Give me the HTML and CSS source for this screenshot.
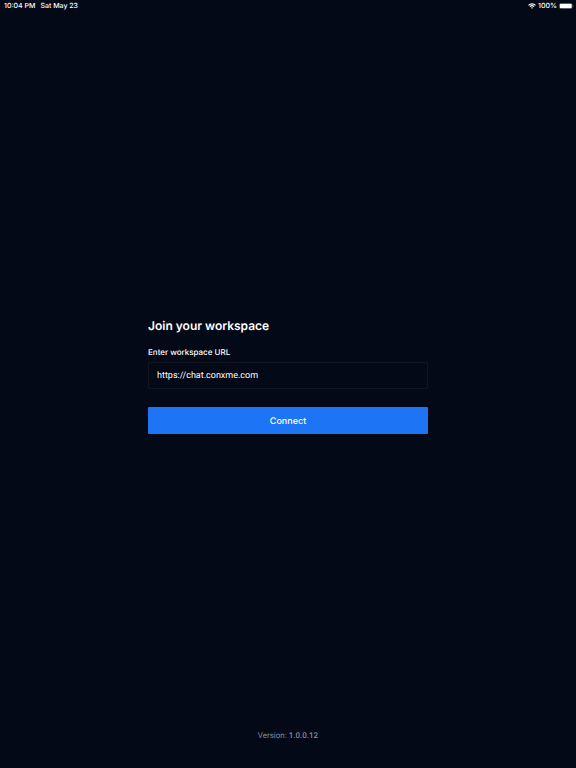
FILE: index.html
```html
<!DOCTYPE html>
<html lang="en">
<head>
<meta charset="utf-8">
<meta name="viewport" content="width=device-width, initial-scale=1">
<title>Join your workspace</title>
<link rel="stylesheet" href="styles.css">
</head>
<body>
<header class="status">
  <div class="status-group status-time"><span>10:04 PM</span><span>Sat May 23</span></div>
  <div class="status-group">
    <svg class="wifi" viewBox="0 0 16 12" aria-hidden="true"><g fill="none" stroke="currentColor" stroke-width="2.200"><path d="M1 4.600a10 10 0 0 1 14 0"/><path d="M3.800 7.400a6 6 0 0 1 8.400 0"/></g><path d="M5.800 9.300a3.200 3.200 0 0 1 4.400 0L8 11.600z" fill="currentColor"/></svg>
    <span>100%</span>
    <svg class="battery" viewBox="0 0 30 12" aria-hidden="true"><rect x=".5" y=".5" width="26" height="11" rx="3.200" fill="none" stroke="#60646f"/><rect x="1.500" y="1.500" width="24" height="9" rx="2.200" fill="currentColor"/><path d="M27.500 4v4c1-.4 1.500-1.100 1.500-2S28.500 4.400 27.500 4z" fill="#60646f"/></svg>
  </div>
</header>
<main class="content">
  <form class="join">
    <h1 class="title">Join your workspace</h1>
    <label class="label" for="url">Enter workspace URL</label>
    <input class="field" id="url" type="url" value="https://chat.conxme.com">
    <button class="connect" type="button">Connect</button>
  </form>
</main>
<footer class="version">Version: <strong>1.0.0.12</strong></footer>
</body>
</html>
```
FILE: styles.css
```css
* { box-sizing: border-box; }
body {
  margin: 0;
  min-height: 100vh;
  display: flex;
  flex-direction: column;
  background: #030917;
  color: #fff;
  font-family: Inter, "Liberation Sans", sans-serif;
  text-rendering: geometricPrecision;
}
.status {
  display: flex;
  justify-content: space-between;
  height: 12px;
  padding: 0 2px 0 4px;
  font-size: 7px;
  line-height: 12px;
  font-weight: 500;
}
.status-group { display: flex; align-items: center; gap: 2px; }
.status-time { gap: 5px; }
.wifi { width: 8px; height: 6px; }
.battery { width: 15px; height: 6px; }
.content {
  flex: 1;
  display: flex;
  align-items: center;
  justify-content: center;
  padding: 9px 16px 0;
}
.join { width: 100%; max-width: 280px; }
.title { margin: 0 0 12px; font-size: 12px; line-height: 16px; font-weight: 600; }
.label { display: block; margin-bottom: 4px; font-size: 8px; line-height: 12px; font-weight: 500; }
.field, .connect {
  display: block;
  width: 100%;
  height: 27px;
  border-radius: 1px;
  color: #fff;
  font-family: inherit;
  font-size: 9px;
  text-rendering: inherit;
  outline: none;
}
.field { margin-bottom: 18px; padding: 2px 8px 0; background: transparent; border: 1px solid #10161f; font-family: Roboto, sans-serif; }
.connect { padding: 2px 0 0; background: #1d74f5; border: 0; font-weight: 500; }
.version { padding: 0 16px 26px; color: #878a92; text-align: center; font-family: Roboto, sans-serif; font-size: 8px; line-height: 12px; }
.version strong { font-weight: 500; }
```
